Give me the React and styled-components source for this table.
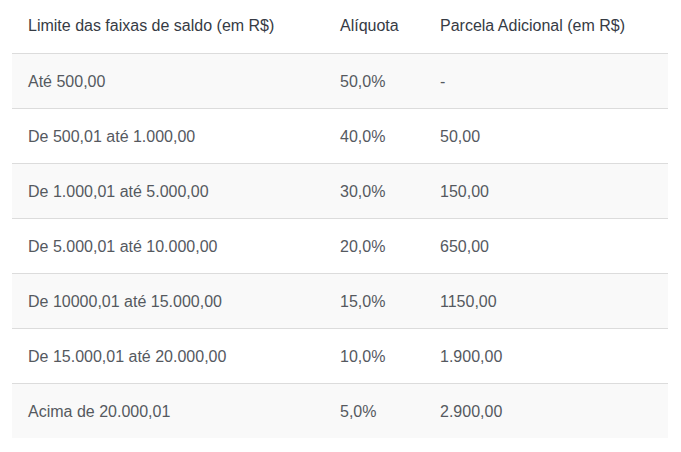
import React from 'react';
import styled, { createGlobalStyle } from 'styled-components';

const GlobalStyle = createGlobalStyle`
    body {
        margin: 0;
        background: #fff;
        font-family: "Liberation Sans", Arial, sans-serif;
    }
`;

const Wrapper = styled.div`
    padding: 0 13px 0 12px;
`;

const Table = styled.table`
    width: 100%;
    border-collapse: collapse;
    table-layout: fixed;
`;

const HeadCell = styled.th`
    box-sizing: border-box;
    width: ${props => props.$width || 'auto'};
    height: 53px;
    padding: 0 16px;
    text-align: left;
    vertical-align: middle;
    font-size: 16px;
    font-weight: normal;
    color: #363b44;
    border-bottom: 1px solid #dcdcdc;
    white-space: nowrap;
`;

const Row = styled.tr`
    background: ${props => (props.$striped ? '#f9f9f9' : '#fff')};
    border-top: 1px solid #dcdcdc;

    &:first-child {
        border-top: none;
    }
`;

const Cell = styled.td`
    box-sizing: border-box;
    height: 55px;
    padding: 2px 16px 0;
    vertical-align: middle;
    font-size: 16px;
    color: #55595f;
    white-space: nowrap;
`;

const rows = [
    ['Até 500,00', '50,0%', '-'],
    ['De 500,01 até 1.000,00', '40,0%', '50,00'],
    ['De 1.000,01 até 5.000,00', '30,0%', '150,00'],
    ['De 5.000,01 até 10.000,00', '20,0%', '650,00'],
    ['De 10000,01 até 15.000,00', '15,0%', '1150,00'],
    ['De 15.000,01 até 20.000,00', '10,0%', '1.900,00'],
    ['Acima de 20.000,01', '5,0%', '2.900,00'],
];

const App = () => {
    return (
        <>
            <GlobalStyle />
            <Wrapper>
                <Table>
                    <thead>
                        <tr>
                            <HeadCell $width="312px">Limite das faixas de saldo (em R$)</HeadCell>
                            <HeadCell $width="100px">Alíquota</HeadCell>
                            <HeadCell>Parcela Adicional (em R$)</HeadCell>
                        </tr>
                    </thead>
                    <tbody>
                        {rows.map((row, i) => (
                            <Row key={row[0]} $striped={i % 2 === 0}>
                                {row.map((value, j) => (
                                    <Cell key={j}>{value}</Cell>
                                ))}
                            </Row>
                        ))}
                    </tbody>
                </Table>
            </Wrapper>
        </>
    );
}

export default App;
